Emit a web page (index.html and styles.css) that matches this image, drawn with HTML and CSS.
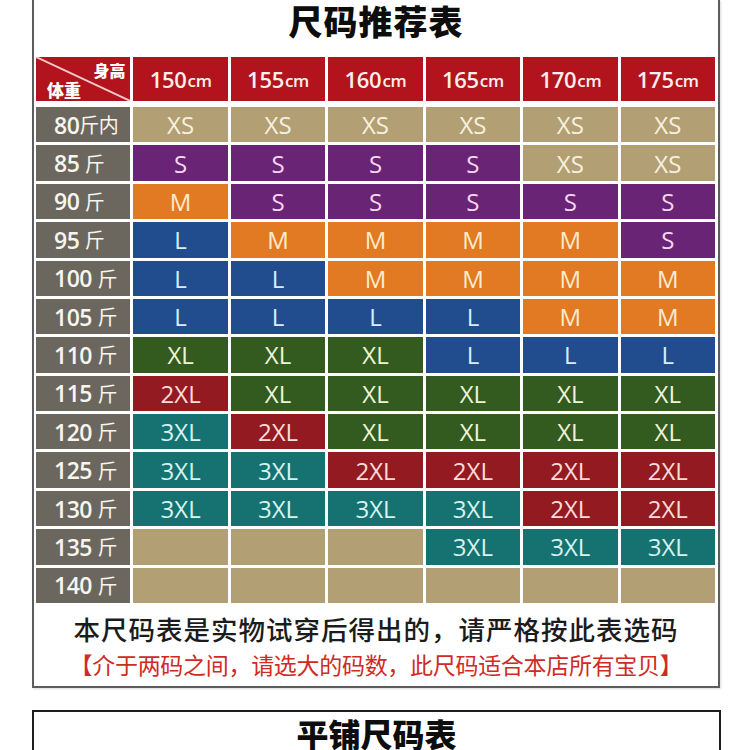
FILE: index.html
```html
<!DOCTYPE html>
<html lang="zh">
<head>
<meta charset="utf-8">
<link rel="stylesheet" href="styles.css">
</head>
<body>
<div class="card main">
  <h1 class="title">尺码推荐表</h1>
  <div class="chart">
    <div class="corner">
      <svg class="diag" viewBox="0 0 100 100" preserveAspectRatio="none"><line x1="0" y1="0" x2="100" y2="100" stroke="#f3c9c9" stroke-width="2" vector-effect="non-scaling-stroke"/></svg>
      <span class="c-h">身高</span>
      <span class="c-w">体重</span>
    </div>
    <div class="hd">150<small>cm</small></div>
    <div class="hd">155<small>cm</small></div>
    <div class="hd">160<small>cm</small></div>
    <div class="hd">165<small>cm</small></div>
    <div class="hd">170<small>cm</small></div>
    <div class="hd">175<small>cm</small></div>

    <div class="wt">80<span>斤内</span></div>
    <div class="c xs">XS</div><div class="c xs">XS</div><div class="c xs">XS</div><div class="c xs">XS</div><div class="c xs">XS</div><div class="c xs">XS</div>

    <div class="wt">85 <span>斤</span></div>
    <div class="c s">S</div><div class="c s">S</div><div class="c s">S</div><div class="c s">S</div><div class="c xs">XS</div><div class="c xs">XS</div>

    <div class="wt">90 <span>斤</span></div>
    <div class="c m">M</div><div class="c s">S</div><div class="c s">S</div><div class="c s">S</div><div class="c s">S</div><div class="c s">S</div>

    <div class="wt">95 <span>斤</span></div>
    <div class="c l">L</div><div class="c m">M</div><div class="c m">M</div><div class="c m">M</div><div class="c m">M</div><div class="c s">S</div>

    <div class="wt">100 <span>斤</span></div>
    <div class="c l">L</div><div class="c l">L</div><div class="c m">M</div><div class="c m">M</div><div class="c m">M</div><div class="c m">M</div>

    <div class="wt">105 <span>斤</span></div>
    <div class="c l">L</div><div class="c l">L</div><div class="c l">L</div><div class="c l">L</div><div class="c m">M</div><div class="c m">M</div>

    <div class="wt">110 <span>斤</span></div>
    <div class="c xl">XL</div><div class="c xl">XL</div><div class="c xl">XL</div><div class="c l">L</div><div class="c l">L</div><div class="c l">L</div>

    <div class="wt">115 <span>斤</span></div>
    <div class="c x2">2XL</div><div class="c xl">XL</div><div class="c xl">XL</div><div class="c xl">XL</div><div class="c xl">XL</div><div class="c xl">XL</div>

    <div class="wt">120 <span>斤</span></div>
    <div class="c x3">3XL</div><div class="c x2">2XL</div><div class="c xl">XL</div><div class="c xl">XL</div><div class="c xl">XL</div><div class="c xl">XL</div>

    <div class="wt">125 <span>斤</span></div>
    <div class="c x3">3XL</div><div class="c x3">3XL</div><div class="c x2">2XL</div><div class="c x2">2XL</div><div class="c x2">2XL</div><div class="c x2">2XL</div>

    <div class="wt">130 <span>斤</span></div>
    <div class="c x3">3XL</div><div class="c x3">3XL</div><div class="c x3">3XL</div><div class="c x3">3XL</div><div class="c x2">2XL</div><div class="c x2">2XL</div>

    <div class="wt">135 <span>斤</span></div>
    <div class="c xs"></div><div class="c xs"></div><div class="c xs"></div><div class="c x3">3XL</div><div class="c x3">3XL</div><div class="c x3">3XL</div>

    <div class="wt">140 <span>斤</span></div>
    <div class="c xs"></div><div class="c xs"></div><div class="c xs"></div><div class="c xs"></div><div class="c xs"></div><div class="c xs"></div>
  </div>
  <p class="note">本尺码表是实物试穿后得出的，请严格按此表选码</p>
  <p class="warn">【介于两码之间，请选大的码数，此尺码适合本店所有宝贝】</p>
</div>

<div class="card flat">
  <h2 class="title2">平铺尺码表</h2>
</div>
</body>
</html>
```

FILE: styles.css
```css
* { box-sizing: border-box; }

html, body {
  margin: 0;
  padding: 0;
  background: #ffffff;
  overflow: hidden;
}

body {
  font-family: "Open Sans", "Noto Sans CJK SC", sans-serif;
  color: #1a1a1a;
}

.card {
  margin-left: 32px;
}

.main {
  width: 688px;
  height: 688px;
  border: 2px solid #5d5d5d;
  border-top: none;
  box-shadow: 1px 1px 2px rgba(0,0,0,0.15);
}

.title {
  margin: 0;
  height: 57px;
  padding-top: 1px;
  font-family: "Noto Sans CJK SC", sans-serif;
  font-weight: 900;
  font-size: 34px;
  line-height: 40px;
  text-align: center;
  letter-spacing: 1px;
  color: #0d0d0d;
}

.chart {
  margin-left: 2px;
  width: 679px;
  height: 546px;
  display: grid;
  grid-template-columns: repeat(7, 1fr);
  grid-template-rows: 47px repeat(13, 1fr);
  gap: 3px;
}

.corner {
  position: relative;
  height: 44px;
  background: #b2131c;
  color: #fff;
  font-family: "Noto Sans CJK SC", sans-serif;
  font-weight: 900;
}

.diag {
  position: absolute;
  left: 0;
  top: 0;
  width: 100%;
  height: 100%;
}

.c-h {
  position: absolute;
  right: 5px;
  top: 3px;
  font-size: 16px;
  line-height: 20px;
}

.c-w {
  position: absolute;
  left: 11px;
  bottom: 1px;
  font-size: 17px;
  line-height: 21px;
}

.hd {
  height: 44px;
  background: #b2131c;
  color: #fbeeee;
  display: flex;
  align-items: center;
  justify-content: center;
  font-size: 22px;
  font-weight: 600;
  letter-spacing: -0.3px;
}

.hd small {
  font-size: 17px;
  font-weight: 600;
  margin-left: 1px;
  position: relative;
  top: 1px;
}

.wt {
  background: #6b675f;
  color: #f8f5ee;
  display: flex;
  align-items: center;
  padding-left: 18px;
  font-size: 23px;
  font-weight: 600;
  letter-spacing: -0.5px;
  white-space: pre;
}

.wt span {
  font-family: "Noto Sans CJK SC", sans-serif;
  font-size: 20px;
  font-weight: 400;
}

.c {
  display: flex;
  align-items: center;
  justify-content: center;
  font-size: 24px;
  font-weight: 400;
}

.xs { background: #b39f74; color: #f7f1de; }
.s  { background: #6a2476; color: #f6d8f1; }
.m  { background: #e17a22; color: #fcebcf; }
.l  { background: #214d8f; color: #dcecfb; }
.xl { background: #335a1f; color: #eef4d8; }
.x2 { background: #941a22; color: #fbdcd8; }
.x3 { background: #157270; color: #d8f3ef; }

.note {
  margin: 9px 0 0;
  text-align: center;
  font-family: "Noto Sans CJK SC", sans-serif;
  font-size: 26.5px;
  font-weight: 500;
  line-height: 34px;
  color: #1c1c1c;
  letter-spacing: 1px;
}

.warn {
  margin: 2px 0 0;
  text-align: center;
  font-family: "Noto Sans CJK SC", sans-serif;
  font-size: 23px;
  font-weight: 400;
  line-height: 32px;
  letter-spacing: -0.3px;
  color: #cf2b26;
}

.flat {
  margin-top: 22px;
  width: 689px;
  height: 120px;
  border: 2px solid #1e1e1e;
}

.title2 {
  margin: 0;
  padding-top: 2px;
  text-align: center;
  font-family: "Noto Sans CJK SC", sans-serif;
  font-weight: 900;
  font-size: 32px;
  line-height: 38px;
  color: #0d0d0d;
}
```
